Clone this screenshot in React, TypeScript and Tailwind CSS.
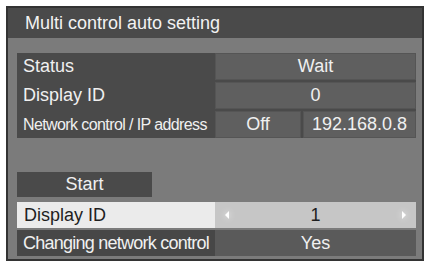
import * as React from 'react';

const font = { fontFamily: '"Liberation Sans", Arial, sans-serif' };

function Arrow({ dir }: { dir: 'left' | 'right' }) {
  return (
    <svg width="10" height="12" viewBox="0 0 10 12" className="drop-shadow-[0_0_3px_rgba(255,255,255,0.9)]">
      {dir === 'left' ? (
        <polygon points="7,2 3,6 7,10" fill="#ffffff" />
      ) : (
        <polygon points="3,2 7,6 3,10" fill="#ffffff" />
      )}
    </svg>
  );
}

export default function App() {
  return (
    <div className="w-[429px] h-[268px] bg-white pt-[6px] pl-[6px]" style={font}>
      <div className="w-[418px] h-[255px] border-2 border-[#333333] bg-[#7b7b7b] flex flex-col">
        {/* Title bar */}
        <div className="h-[30px] bg-[#4a4a4a] flex items-center pl-[17px] text-[#f2f2f2] text-[18px] leading-none">
          Multi control auto setting
        </div>

        <div className="flex flex-col pl-[9px] pr-[6px] pt-[15px]">
          {/* Status block */}
          <div className="bg-[#4a4a4a] flex flex-col gap-[2px] text-[#f0f0f0]">
            <div className="flex h-[27px]">
              <div className="w-[198px] flex items-center pl-[6px] text-[18px]">Status</div>
              <div className="flex-1 bg-[#5f5f5f] border border-[#555555] flex items-center justify-center text-[18px]">Wait</div>
            </div>
            <div className="flex h-[27px]">
              <div className="w-[198px] flex items-center pl-[6px] text-[18px]">Display ID</div>
              <div className="flex-1 bg-[#5f5f5f] border border-[#555555] flex items-center justify-center text-[18px]">0</div>
            </div>
            <div className="flex h-[27px] gap-[2px]">
              <div className="w-[196px] flex items-center pl-[6px] text-[16px] tracking-[-0.6px] whitespace-nowrap">
                Network control / IP address
              </div>
              <div className="w-[86px] bg-[#5f5f5f] border border-[#555555] flex items-center justify-center text-[18px]">Off</div>
              <div className="flex-1 bg-[#5f5f5f] border border-[#555555] flex items-center justify-center text-[18px]">192.168.0.8</div>
            </div>
          </div>

          {/* Start button */}
          <div className="mt-[34px] w-[135px] h-[25px] bg-[#4a4a4a] flex items-center justify-center text-[#f0f0f0] text-[18px]">
            Start
          </div>

          {/* Display ID selected */}
          <div className="mt-[5px] flex h-[26px]">
            <div className="w-[198px] bg-[#ebebeb] flex items-center pl-[7px] text-[18px] text-[#1e1e1e]">Display ID</div>
            <div className="flex-1 bg-[#c6c6c6] flex items-center justify-between px-[7px] text-[18px] text-[#1e1e1e]">
              <Arrow dir="left" />
              <span>1</span>
              <Arrow dir="right" />
            </div>
          </div>

          {/* Changing network control */}
          <div className="mt-[2px] flex h-[26px]">
            <div className="w-[198px] bg-[#474747] flex items-center pl-[6px] text-[18px] tracking-[-0.75px] text-[#f0f0f0] whitespace-nowrap">
              Changing network control
            </div>
            <div className="flex-1 bg-[#5a5a5a] flex items-center justify-center text-[18px] text-[#f0f0f0]">Yes</div>
          </div>
        </div>
      </div>
    </div>
  );
}
